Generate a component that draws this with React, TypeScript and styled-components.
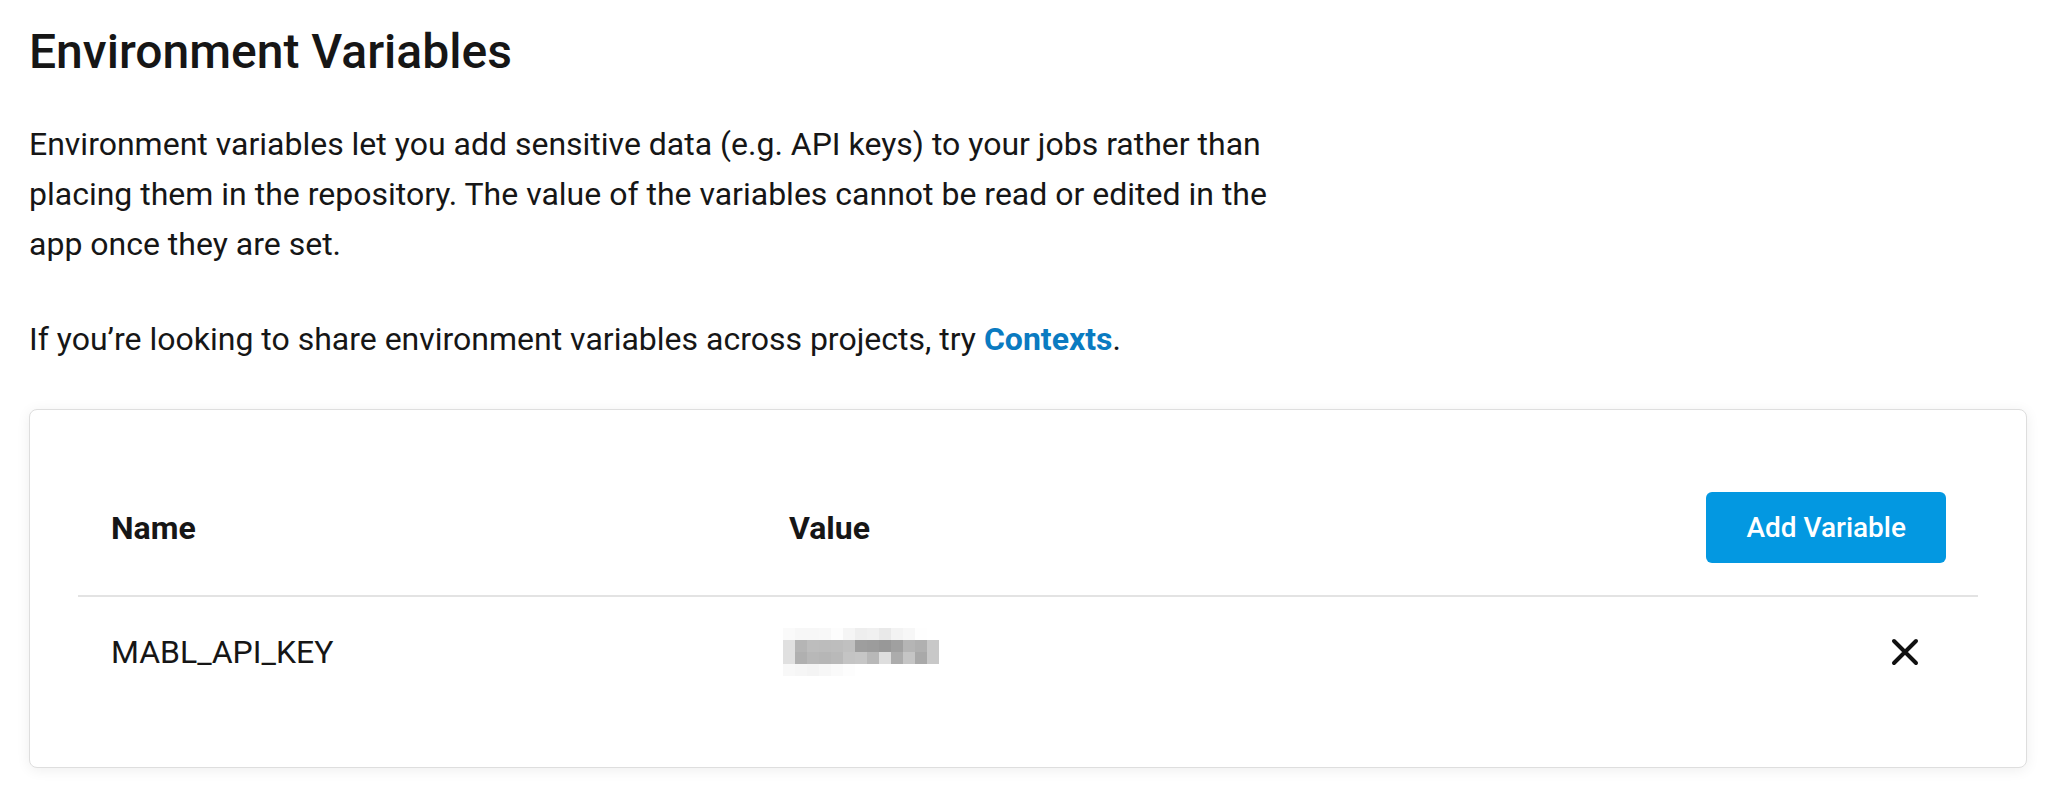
import React from "react";
import styled, { createGlobalStyle } from "styled-components";

const GlobalStyle = createGlobalStyle`
  html, body {
    margin: 0;
    padding: 0;
    background: #ffffff;
  }
  body {
    font-family: Roboto, "Noto Sans", "Liberation Sans", sans-serif;
    color: #161616;
    -webkit-font-smoothing: antialiased;
  }
  * { box-sizing: border-box; }
`;

const Page = styled.main`
  padding: 23px 19px 24px 29px;
`;

const Title = styled.h1`
  margin: 0;
  font-size: 48px;
  line-height: 1.2;
  font-weight: 500;
  color: #161616;
`;

const Paragraph = styled.p<{ $first?: boolean }>`
  margin: ${(p) => (p.$first ? "38px" : "45px")} 0 0;
  max-width: 1265px;
  font-size: 32px;
  line-height: 50px;
  font-weight: 400;
  color: #161616;
`;

const Link = styled.a`
  color: #0a7bc1;
  font-weight: 700;
  text-decoration: none;
`;

const Card = styled.section`
  margin-top: 45px;
  border: 1px solid #dedede;
  border-radius: 8px;
  background: #fff;
  box-shadow: 0 2px 14px rgba(0, 0, 0, 0.07);
  padding: 51px 48px 60px;
`;

const TableRow = styled.div<{ $header?: boolean }>`
  display: grid;
  grid-template-columns: 679px 1fr auto;
  align-items: center;
  height: ${(p) => (p.$header ? "136px" : "110px")};
  border-bottom: ${(p) => (p.$header ? "2px solid #e3e3e3" : "none")};
`;

const Cell = styled.div<{ $bold?: boolean; $right?: boolean }>`
  padding: 0 32px 0 33px;
  font-size: 32px;
  font-weight: ${(p) => (p.$bold ? 700 : 400)};
  color: #161616;
  display: flex;
  justify-content: ${(p) => (p.$right ? "flex-end" : "flex-start")};
  align-items: center;
`;

const ValueCell = styled(Cell)`
  padding-left: 32px;
`;

const PrimaryButton = styled.button`
  height: 71px;
  padding: 0 40px;
  border: none;
  border-radius: 6px;
  background: #0398e1;
  color: #ffffff;
  font-family: inherit;
  font-size: 28px;
  font-weight: 500;
  cursor: pointer;
`;

const IconButton = styled.button`
  display: flex;
  align-items: center;
  justify-content: center;
  width: 30px;
  height: 30px;
  margin-right: 26px;
  padding: 0;
  border: none;
  background: transparent;
  cursor: pointer;
`;

const Masked = styled.svg`
  display: block;
  margin-left: -6px;
`;

const maskRows: string[][] = [
  ["#fafafa", "#f7f7f7", "#f7f7f7", "#f8f8f8", "#fdfdfd", "#f5f5f5", "#eeeeee", "#f0f0f0", "#e9e9e9", "#f3f3f3", "#f7f7f7", "#fefefe", "#ffffff"],
  ["#e0e0e0", "#b5b5b5", "#bdbdbd", "#bcbcbc", "#bdbdbd", "#c0c0c0", "#9e9e9e", "#9c9c9c", "#989898", "#a0a0a0", "#b5b5b5", "#b0b0b0", "#c8c8c8"],
  ["#e0e0e0", "#b0b0b0", "#b8b8b8", "#b6b6b6", "#b9b9b9", "#c4c4c4", "#c6c6c6", "#b8b8b8", "#dedede", "#acacac", "#c5c5c5", "#a9a9a9", "#c8c8c8"],
  ["#f8f8f8", "#f6f6f6", "#f4f4f4", "#f7f7f7", "#fafafa", "#fdfdfd", "#ffffff", "#ffffff", "#ffffff", "#ffffff", "#ffffff", "#ffffff", "#ffffff"],
];

const MaskedValue = () => (
  <Masked width="156" height="48" viewBox="0 0 156 48" aria-label="hidden value">
    {maskRows.map((row, r) =>
      row.map((c, i) => <rect key={`${r}-${i}`} x={i * 12} y={r * 12} width="12" height="12" fill={c} />)
    )}
  </Masked>
);

const CloseIcon = () => (
  <svg width="28" height="28" viewBox="0 0 28 28" fill="none">
    <path d="M3 3 L25 25 M25 3 L3 25" stroke="#111" strokeWidth="4" strokeLinecap="round" />
  </svg>
);

export default function App() {
  return (
    <>
      <GlobalStyle />
      <Page>
        <Title>Environment Variables</Title>
        <Paragraph $first>
          Environment variables let you add sensitive data (e.g. API keys) to your jobs rather than placing them in
          the repository. The value of the variables cannot be read or edited in the app once they are set.
        </Paragraph>
        <Paragraph>
          If you’re looking to share environment variables across projects, try <Link href="#">Contexts</Link>.
        </Paragraph>
        <Card>
          <TableRow $header>
            <Cell $bold>Name</Cell>
            <ValueCell $bold>Value</ValueCell>
            <Cell $right>
              <PrimaryButton>Add Variable</PrimaryButton>
            </Cell>
          </TableRow>
          <TableRow>
            <Cell>MABL_API_KEY</Cell>
            <ValueCell>
              <MaskedValue />
            </ValueCell>
            <Cell $right>
              <IconButton aria-label="Delete variable">
                <CloseIcon />
              </IconButton>
            </Cell>
          </TableRow>
        </Card>
      </Page>
    </>
  );
}
